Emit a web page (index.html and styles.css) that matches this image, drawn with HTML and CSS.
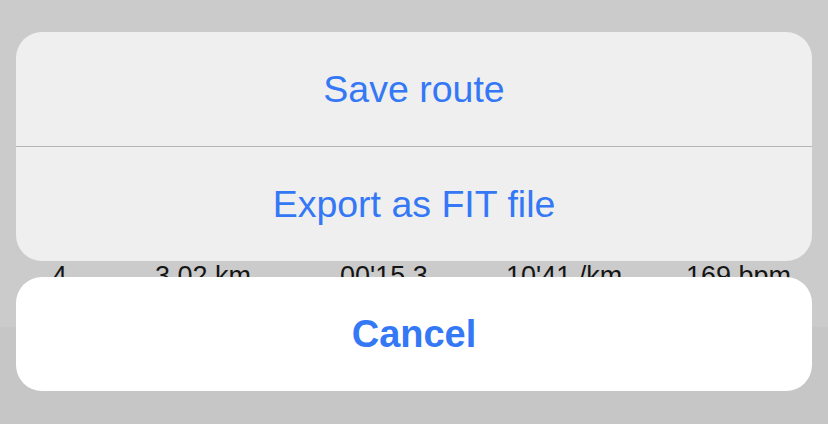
FILE: index.html
```html
<!DOCTYPE html>
<html lang="en">
<head>
    <meta charset="UTF-8">
    <meta name="viewport" content="width=device-width, initial-scale=1.0">
    <title>Route actions</title>
    <link rel="stylesheet" href="styles.css">
</head>
<body>
    <div class="page">
        <div class="stats-row">
            <span>4</span>
            <span>3.02 km</span>
            <span>00'15.3</span>
            <span>10'41 /km</span>
            <span>169 bpm</span>
        </div>
    </div>

    <div class="sheet">
        <div class="sheet-group">
            <button class="sheet-btn">Save route</button>
            <button class="sheet-btn">Export as FIT file</button>
        </div>
        <button class="sheet-btn cancel">Cancel</button>
    </div>
</body>
</html>
```

FILE: styles.css
```css
body {
    margin: 0;
    background-color: #c6c6c6;
    font-family: "Liberation Sans", Arial, sans-serif;
    width: 828px;
    height: 424px;
    overflow: hidden;
    position: relative;
}
.page {
    height: 327px;
    background-color: #cbcbcb;
}
.stats-row {
    display: grid;
    grid-template-columns: 103px 185px 166px 180px 1fr;
    padding: 260px 0 0 52px;
    font-size: 27px;
    line-height: 32px;
    color: #151515;
}
.sheet {
    position: absolute;
    top: 32px;
    left: 16px;
    right: 16px;
    display: flex;
    flex-direction: column;
    gap: 16px;
}
.sheet-group {
    background: #efefef;
    border-radius: 26px;
    overflow: hidden;
    display: flex;
    flex-direction: column;
}
.sheet-btn {
    height: 114px;
    border: none;
    background: transparent;
    font-family: inherit;
    font-size: 37.5px;
    color: #3478f6;
    padding: 0;
    cursor: pointer;
}
.sheet-group .sheet-btn + .sheet-btn {
    border-top: 1px solid #b4b4b4;
    height: 115px;
}
.cancel {
    background: #fff;
    border-radius: 26px;
    font-weight: bold;
    font-size: 38px;
}
```
